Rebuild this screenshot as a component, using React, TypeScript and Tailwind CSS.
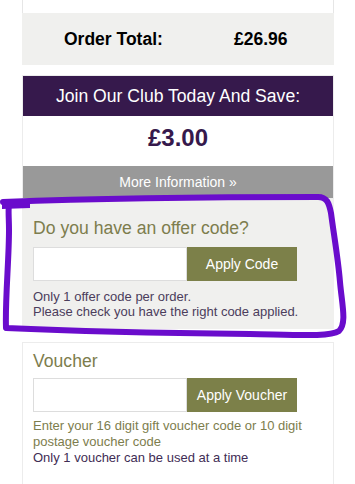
export default function App() {
  return (
    <div className="relative h-[484px] w-[355px] overflow-hidden bg-white font-['Liberation_Sans',Arial,sans-serif]">
      <div className="ml-[22px] w-[312px]">
        {/* tail of the basket panel */}
        <div className="h-[13px] border-x border-[#e6e6e6] bg-white" />

        <div className="flex h-[52px] items-center bg-[#f0f0ee] text-[17.5px] font-bold text-black">
          <span className="ml-[42px] w-[170px]">Order Total:</span>
          <span>£26.96</span>
        </div>

        <div className="mt-[10px] border border-[#ececec]">
          <div className="flex h-[40px] items-center justify-center bg-[#36194c] text-[17.6px] text-white">
            Join Our Club Today And Save:
          </div>
          <div className="flex h-[50px] items-center justify-center pb-[6px] text-[24px] font-bold text-[#36194c]">
            £3.00
          </div>
          <div className="flex h-[32px] items-center justify-center bg-[#999999] text-[14px] text-white">
            More Information »
          </div>
        </div>

        <div className="h-[130px] bg-[#f0f0ee] px-[11px] pt-[18px]">
          <h3 className="text-[17.6px] leading-[22px] text-[#7d7d4d]">Do you have an offer code?</h3>
          <div className="mt-[8px] flex h-[34px]">
            <input className="h-full w-[154px] border border-[#dddddd] bg-white outline-none" />
            <button className="h-full w-[110px] bg-[#7c8049] text-[14px] text-white">Apply Code</button>
          </div>
          <p className="mt-[8px] text-[13px] leading-[15px] text-[#4b3d5c]">
            Only 1 offer code per order.
            <br />
            Please check you have the right code applied.
          </p>
        </div>

        <div className="mt-[13px] h-[160px] border border-[#ececec] bg-white px-[10px] pt-[7px]">
          <h3 className="text-[17.6px] leading-[22px] text-[#7d7d4d]">Voucher</h3>
          <div className="mt-[6px] flex h-[34px]">
            <input className="h-full w-[154px] border border-[#dddddd] bg-white outline-none" />
            <button className="h-full w-[110px] bg-[#7c8049] text-[14px] text-white">Apply Voucher</button>
          </div>
          <p className="mt-[6px] text-[13px] leading-[16px] text-[#7d7d4d]">
            Enter your 16 digit gift voucher code or 10 digit postage voucher code
          </p>
          <p className="text-[13px] leading-[16px] text-[#3f2d55]">Only 1 voucher can be used at a time</p>
        </div>
      </div>

      {/* hand-drawn highlight */}
      <svg className="pointer-events-none absolute left-0 top-0" width="355" height="484" viewBox="0 0 355 484">
        <path
          d="M3,202 C80,199 200,197 318,197 C327,197 329,203 331,213 C334,236 338,258 340,282 C342,305 347,323 339,331 C330,337 300,335 250,334 C150,333 70,331 6,328 C5,300 9,260 9,230 C9,218 8,210 9,204"
          fill="none"
          stroke="#6a0ccc"
          strokeWidth="6"
          strokeLinecap="round"
          strokeLinejoin="round"
        />
        <path d="M2,200 L30,199 L30,208 L2,209 Z" fill="#6a0ccc" />
      </svg>
    </div>
  );
}
